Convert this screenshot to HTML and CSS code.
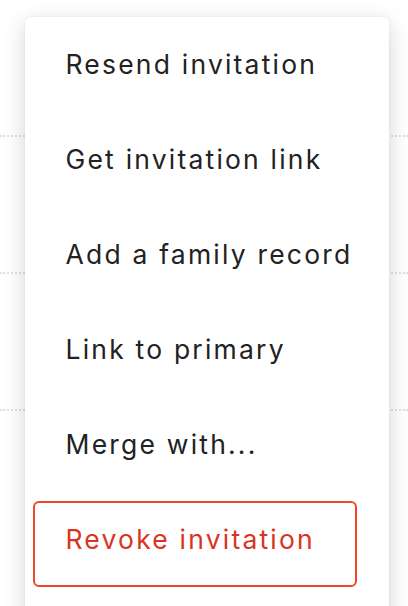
FILE: index.html
```html
<!DOCTYPE html>
<html>
<head>
<meta charset="utf-8">
<link rel="stylesheet" href="styles.css">
</head>
<body>
<div class="table">
  <div class="trow"></div>
  <div class="trow"></div>
  <div class="trow"></div>
  <div class="trow last"></div>
</div>
<div class="menu">
  <div class="item">Resend invitation</div>
  <div class="item">Get invitation link</div>
  <div class="item">Add a family record</div>
  <div class="item">Link to primary</div>
  <div class="item">Merge with...</div>
  <div class="item danger">Revoke invitation</div>
</div>
</body>
</html>
```
FILE: styles.css
```css
html, body {
  margin: 0;
  padding: 0;
  background: #ffffff;
  overflow: hidden;
  height: 606px;
}
body {
  position: relative;
  font-family: Inter, "Noto Sans", sans-serif;
}
.table {
  display: flex;
  flex-direction: column;
}
.trow {
  height: 135px;
  border-bottom: 2px dotted #e2e2e2;
}
.trow.last {
  border-bottom: none;
}
.menu {
  position: absolute;
  left: 25px;
  top: 17px;
  width: 364px;
  background: #ffffff;
  border-radius: 6px;
  box-shadow: 0 6px 22px rgba(0, 0, 0, 0.17), 0 0 3px rgba(0, 0, 0, 0.06);
  padding: 9px 32px 40px 8px;
  box-sizing: border-box;
  display: flex;
  flex-direction: column;
  gap: 9px;
}
.item {
  height: 86px;
  box-sizing: border-box;
  padding: 19.5px 0 0 30.5px;
  font-size: 26.5px;
  line-height: 32px;
  letter-spacing: 2.2px;
  color: #222222;
  border: 2.5px solid transparent;
  border-radius: 6px;
  white-space: nowrap;
}
.item.danger {
  color: #d9341f;
  border-color: #f14725;
}
```
